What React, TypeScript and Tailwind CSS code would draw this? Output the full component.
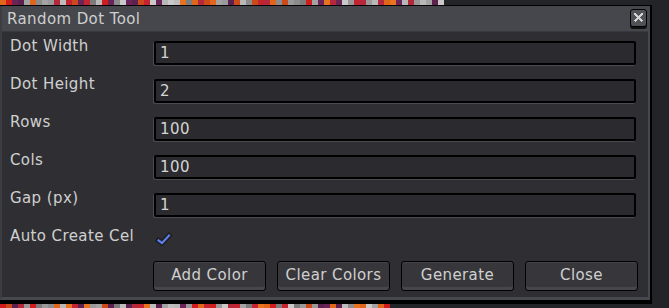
import React from 'react';

const PALETTE = ['#e0661c', '#9a9a9a', '#c42330', '#b8b8b8', '#5d2150', '#8c8c8c', '#d01c1c', '#c9c9c9', '#e8731e', '#a3a3a3', '#b3283a', '#7c7c7c', '#cc4a1a', '#bdbdbd', '#6a2458', '#999999'];

function stripColors(count: number, seed: number): string[] {
  const out: string[] = [];
  for (let i = 0; i < count; i++) {
    const k = (i * 5 + Math.floor(i / 3) * 3 + ((i * i) % 7) + seed) % PALETTE.length;
    out.push(PALETTE[k]);
  }
  return out;
}

const TOP = stripColors(74, 0);
const BOTTOM = stripColors(65, 6);

const FIELDS = [
  { label: 'Dot Width', value: '1' },
  { label: 'Dot Height', value: '2' },
  { label: 'Rows', value: '100' },
  { label: 'Cols', value: '100' },
  { label: 'Gap (px)', value: '1' },
];

const BUTTONS = ['Add Color', 'Clear Colors', 'Generate', 'Close'];

function Strip({ colors }: { colors: string[] }) {
  return (
    <div className="flex h-full">
      {colors.map((color, i) => (
        <div key={i} className="h-full w-[6px]" style={{ backgroundColor: color }} />
      ))}
    </div>
  );
}

function CloseIcon() {
  return (
    <div className="flex h-[20px] w-[17px] items-start">
      <div className="flex h-[18px] w-[17px] items-center justify-center rounded-[3px] border border-black bg-[#505258] shadow-[0_2px_0_#111]">
        <svg width="11" height="11" viewBox="0 0 11 11" shapeRendering="crispEdges">
          <path d="M1.5 1.5 L9.5 9.5 M9.5 1.5 L1.5 9.5" stroke="#d4d4d4" strokeWidth="2.2" />
        </svg>
      </div>
    </div>
  );
}

function CheckMark() {
  return (
    <div className="mt-[3px] flex h-[18px] w-[18px] items-center justify-center">
      <svg width="18" height="18" viewBox="0 0 18 18">
        <path d="M3.5 10.5 L7 13 L14 5.5" fill="none" stroke="#1c1c20" strokeWidth="5" strokeLinecap="square" strokeLinejoin="miter" />
        <path d="M3.5 10.5 L7 13 L14 5.5" fill="none" stroke="#5b80e8" strokeWidth="2.2" strokeLinecap="square" strokeLinejoin="miter" />
      </svg>
    </div>
  );
}

export default function App() {
  return (
    <div
      className="flex h-[308px] w-[669px] flex-col overflow-hidden bg-[#232428] text-[15px] tracking-[0.4px] text-[#cfcfcf]"
      style={{ fontFamily: '"DejaVu Sans", "Liberation Sans", sans-serif' }}
    >
      <div className="h-[5px] shrink-0">
        <Strip colors={TOP} />
      </div>

      <div className="flex h-[299px] shrink-0">
        <div className="flex w-[652px] flex-col border-t border-r-2 border-b-4 border-black">
          <div className="flex flex-1 flex-col border-r-2 border-b-[3px] border-l-2 border-[#46484d] border-l-[#3c3d42]">
            <div className="flex h-[26px] shrink-0 items-center justify-between border-b border-[#38393e] bg-[#45474c] pl-[5px] pr-[1px]">
              <span className="leading-[18px]">Random Dot Tool</span>
              <CloseIcon />
            </div>

            <div className="flex flex-1 flex-col bg-[#2f2f33] pl-[8px] pt-[5px]">
              {FIELDS.map(field => (
                <div key={field.label} className="flex h-[38px] items-start">
                  <span className="w-[144px] leading-[18px]">{field.label}</span>
                  <div className="mt-[4px] h-[24px] w-[482px] rounded-[2px] border-2 border-black bg-[#2b2b2f] pl-[4px] shadow-[-1px_1px_0_#4a4b50] leading-[20px] text-[#d4d4d4]">
                    {field.value}
                  </div>
                </div>
              ))}

              <div className="flex h-[34px] items-start">
                <span className="w-[145px] leading-[18px]">Auto Create Cel</span>
                <CheckMark />
              </div>

              <div className="flex gap-[11px] pl-[143px]">
                {BUTTONS.map(label => (
                  <div
                    key={label}
                    className="flex h-[30px] w-[113px] items-start justify-center rounded-[3px] border border-black bg-[#37373b] pt-[4px] shadow-[inset_0_-3px_0_#46474c,inset_0_1px_0_#434348] leading-[18px]"
                  >
                    {label}
                  </div>
                ))}
              </div>
            </div>
          </div>
        </div>
        <div className="flex-1" />
      </div>

      <div className="h-[4px] shrink-0">
        <Strip colors={BOTTOM} />
      </div>
    </div>
  );
}
